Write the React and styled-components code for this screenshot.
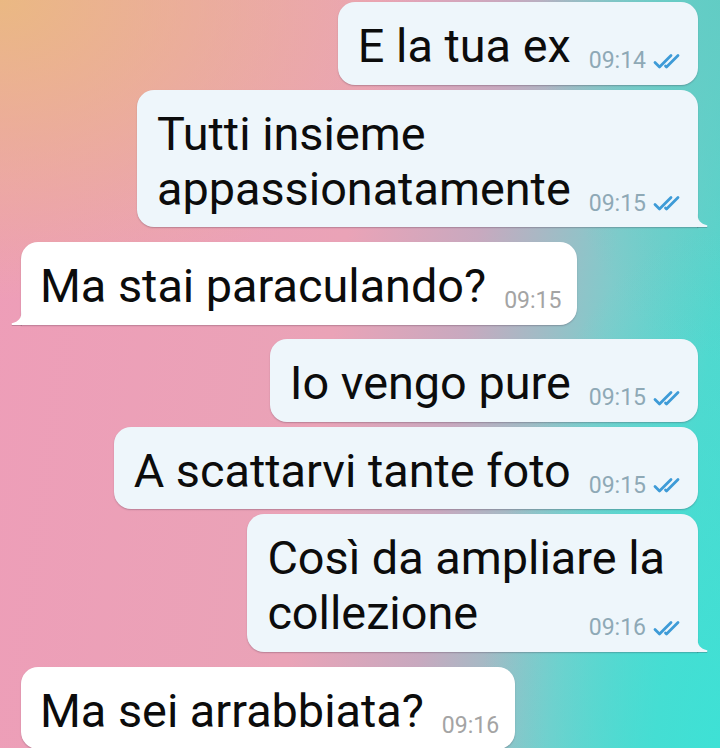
import React from "react";
import styled, { createGlobalStyle, css } from "styled-components";

const GlobalStyle = createGlobalStyle`
  html, body {
    margin: 0;
    padding: 0;
  }
  body {
    font-family: Roboto, "Noto Sans", "Liberation Sans", sans-serif;
  }
`;

const Screen = styled.div`
  width: 720px;
  height: 748px;
  overflow: hidden;
  background:
    radial-gradient(ellipse 420px 300px at 0% 0%, rgba(234, 186, 128, 0.95) 0%, rgba(234, 186, 128, 0) 100%),
    radial-gradient(ellipse 240px 520px at 100% 100%, rgba(60, 226, 214, 0.9) 0%, rgba(60, 226, 214, 0) 100%),
    radial-gradient(ellipse 180px 360px at 100% 0%, rgba(98, 204, 196, 0.95) 0%, rgba(98, 204, 196, 0) 100%),
    linear-gradient(98deg, #ee9db8 0%, #eaa3b7 46%, #c8a9bf 62%, #80cbcb 79%, #55d6cd 92%, #4fd8ce 100%);
`;

const Chat = styled.div`
  display: flex;
  flex-direction: column;
  gap: 14.5px;
  padding: 2px 22px 0 21px;
`;

const Group = styled.div`
  display: flex;
  flex-direction: column;
  gap: 5px;
  align-items: ${p => (p.$out ? "flex-end" : "flex-start")};
`;

const Bubble = styled.div`
  position: relative;
  display: flex;
  flex-direction: column;
  width: fit-content;
  padding: 17px ${p => (p.$out ? "13px" : "16px")} 10.7px ${p => (p.$out ? "20px" : "19px")};
  border-radius: 17px;
  background: ${p => (p.$out ? "#eef6fb" : "#ffffff")};
  box-shadow: 0 1px 1.5px rgba(60, 40, 60, 0.28);
  color: #0c0c0c;
  font-size: 46.8px;
  line-height: 55px;
  ${p =>
    p.$tail &&
    (p.$out
      ? css`
          border-bottom-right-radius: 0;
        `
      : css`
          border-bottom-left-radius: 0;
        `)}
`;

const Tail = styled.svg`
  position: absolute;
  bottom: 0;
  width: 11px;
  height: 15px;
  ${p =>
    p.$out
      ? css`
          right: -10px;
        `
      : css`
          left: -10px;
          transform: scaleX(-1);
        `}
  fill: ${p => (p.$out ? "#eef6fb" : "#ffffff")};
  filter: drop-shadow(0 1px 0.6px rgba(60, 40, 60, 0.25));
`;

const Line = styled.div`
  white-space: nowrap;
  padding-right: 20px;
`;

const LastLine = styled.div`
  display: flex;
  justify-content: space-between;
  gap: 18px;
  white-space: nowrap;
`;

const Meta = styled.div`
  display: flex;
  align-items: center;
  align-self: flex-end;
  margin-bottom: 2px;
  font-size: 23px;
  line-height: 22px;
  color: ${p => (p.$out ? "#8ea9b6" : "#a4a4a4")};
`;

const Checks = styled.svg`
  width: 32px;
  height: 17px;
  margin-left: 7px;
  fill: none;
  stroke: #3e9bd7;
  stroke-width: 2.8;
  stroke-linecap: round;
  stroke-linejoin: round;
`;

const DoubleCheck = () => (
  <Checks viewBox="0 0 32 17">
    <path d="M2 9.5 L6.5 14 L18 2.5" />
    <path d="M12.5 13 L13.5 14 L25 2.5" />
  </Checks>
);

const Message = ({ out, tail, lines, time }) => {
  const last = lines[lines.length - 1];
  return (
    <Bubble $out={out} $tail={tail}>
      {lines.slice(0, -1).map(l => (
        <Line key={l}>{l}</Line>
      ))}
      <LastLine>
        <span>{last}</span>
        <Meta $out={out}>
          {time}
          {out && <DoubleCheck />}
        </Meta>
      </LastLine>
      {tail && (
        <Tail $out={out} viewBox="0 0 11 15">
          <path d="M0 0 C0.5 8 3.5 12 10 13.2 Q11 14 10 15 L0 15 Z" />
        </Tail>
      )}
    </Bubble>
  );
};

const groups = [
  {
    out: true,
    messages: [
      { lines: ["E la tua ex"], time: "09:14" },
      { lines: ["Tutti insieme", "appassionatamente"], time: "09:15" },
    ],
  },
  {
    out: false,
    messages: [{ lines: ["Ma stai paraculando?"], time: "09:15" }],
  },
  {
    out: true,
    messages: [
      { lines: ["Io vengo pure"], time: "09:15" },
      { lines: ["A scattarvi tante foto"], time: "09:15" },
      { lines: ["Così da ampliare la", "collezione"], time: "09:16" },
    ],
  },
  {
    out: false,
    messages: [{ lines: ["Ma sei arrabbiata?"], time: "09:16" }],
  },
];

export default function App() {
  return (
    <Screen>
      <GlobalStyle />
      <Chat>
        {groups.map((g, gi) => (
          <Group key={gi} $out={g.out}>
            {g.messages.map((m, mi) => (
              <Message
                key={mi}
                out={g.out}
                tail={mi === g.messages.length - 1 && gi !== groups.length - 1}
                lines={m.lines}
                time={m.time}
              />
            ))}
          </Group>
        ))}
      </Chat>
    </Screen>
  );
}
